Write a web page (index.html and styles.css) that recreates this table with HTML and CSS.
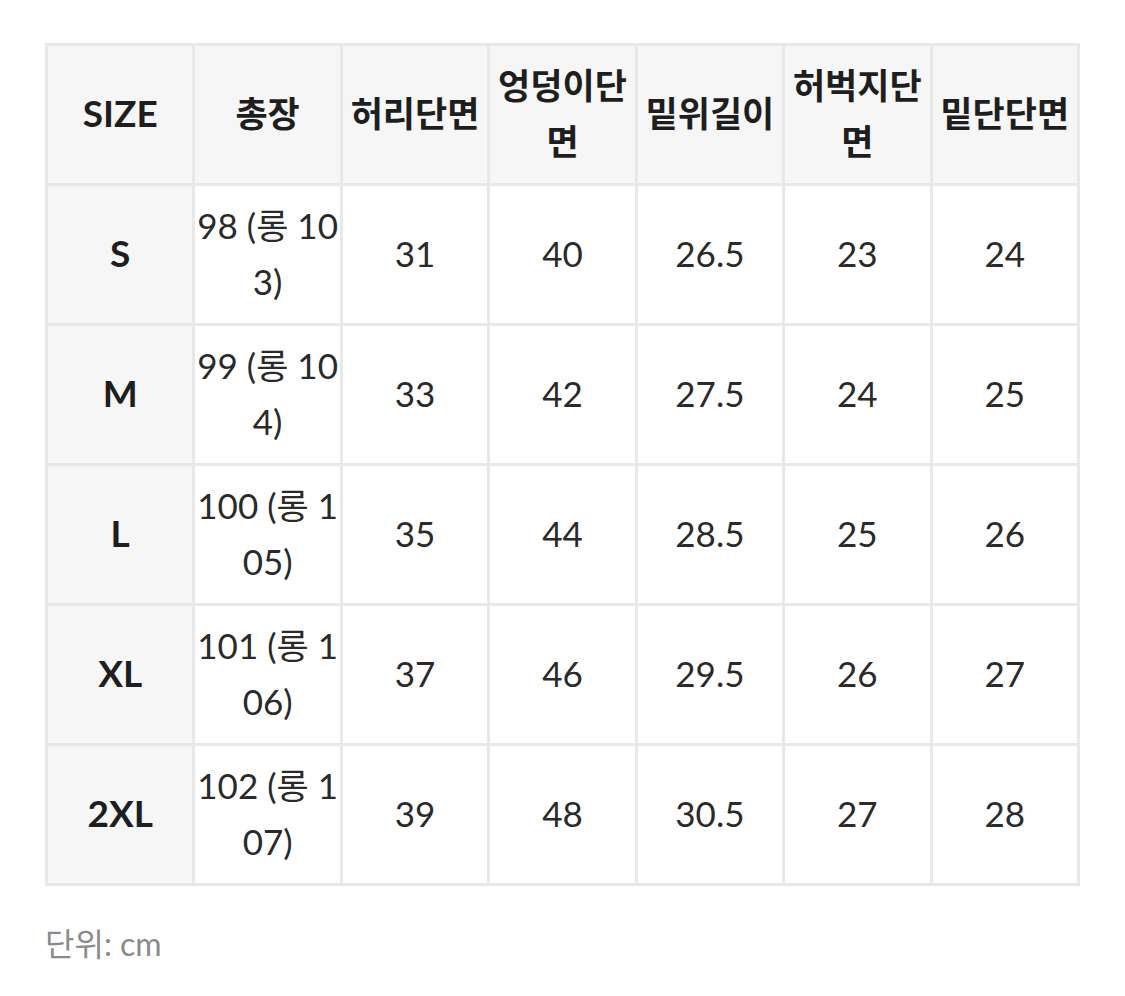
FILE: index.html
```html
<!DOCTYPE html>
<html lang="ko">
<head>
<meta charset="utf-8">
<link rel="stylesheet" href="styles.css">
</head>
<body>
<table class="size-table">
  <thead>
    <tr>
      <th class="label">SIZE</th><th>총장</th><th>허리단면</th><th>엉덩이단면</th><th>밑위길이</th><th>허벅지단면</th><th>밑단단면</th>
    </tr>
  </thead>
  <tbody>
    <tr><th class="label">S</th><td>98 (롱 103)</td><td>31</td><td>40</td><td>26.5</td><td>23</td><td>24</td></tr>
    <tr><th class="label">M</th><td>99 (롱 104)</td><td>33</td><td>42</td><td>27.5</td><td>24</td><td>25</td></tr>
    <tr><th class="label">L</th><td>100 (롱 105)</td><td>35</td><td>44</td><td>28.5</td><td>25</td><td>26</td></tr>
    <tr><th class="label">XL</th><td>101 (롱 106)</td><td>37</td><td>46</td><td>29.5</td><td>26</td><td>27</td></tr>
    <tr><th class="label">2XL</th><td>102 (롱 107)</td><td>39</td><td>48</td><td>30.5</td><td>27</td><td>28</td></tr>
  </tbody>
</table>
<p class="unit">단위: cm</p>
</body>
</html>
```

FILE: styles.css
```css
html, body {
  margin: 0;
  padding: 0;
  background: #fff;
}
body {
  padding: 43px 45px 0 45px;
  font-family: Lato, "Noto Sans CJK KR", sans-serif;
  color: #222;
}
.size-table {
  width: 1035px;
  table-layout: fixed;
  border-collapse: collapse;
  font-size: 35px;
  line-height: 56px;
}
.size-table th,
.size-table td {
  border: 3px solid #e8e8e8;
  height: 133px;
  padding: 0 0 4px 0;
  text-align: center;
  vertical-align: middle;
  word-break: break-all;
}
.size-table th {
  background: #f6f6f6;
  font-weight: 700;
  color: #1e1e1e;
}
.size-table th.label {
  font-size: 37px;
}
.size-table td {
  font-weight: 400;
  color: #2a2a2a;
}
.unit {
  margin: 38px 0 0 0;
  font-size: 32px;
  line-height: 40px;
  color: #8a8a8a;
}
```
